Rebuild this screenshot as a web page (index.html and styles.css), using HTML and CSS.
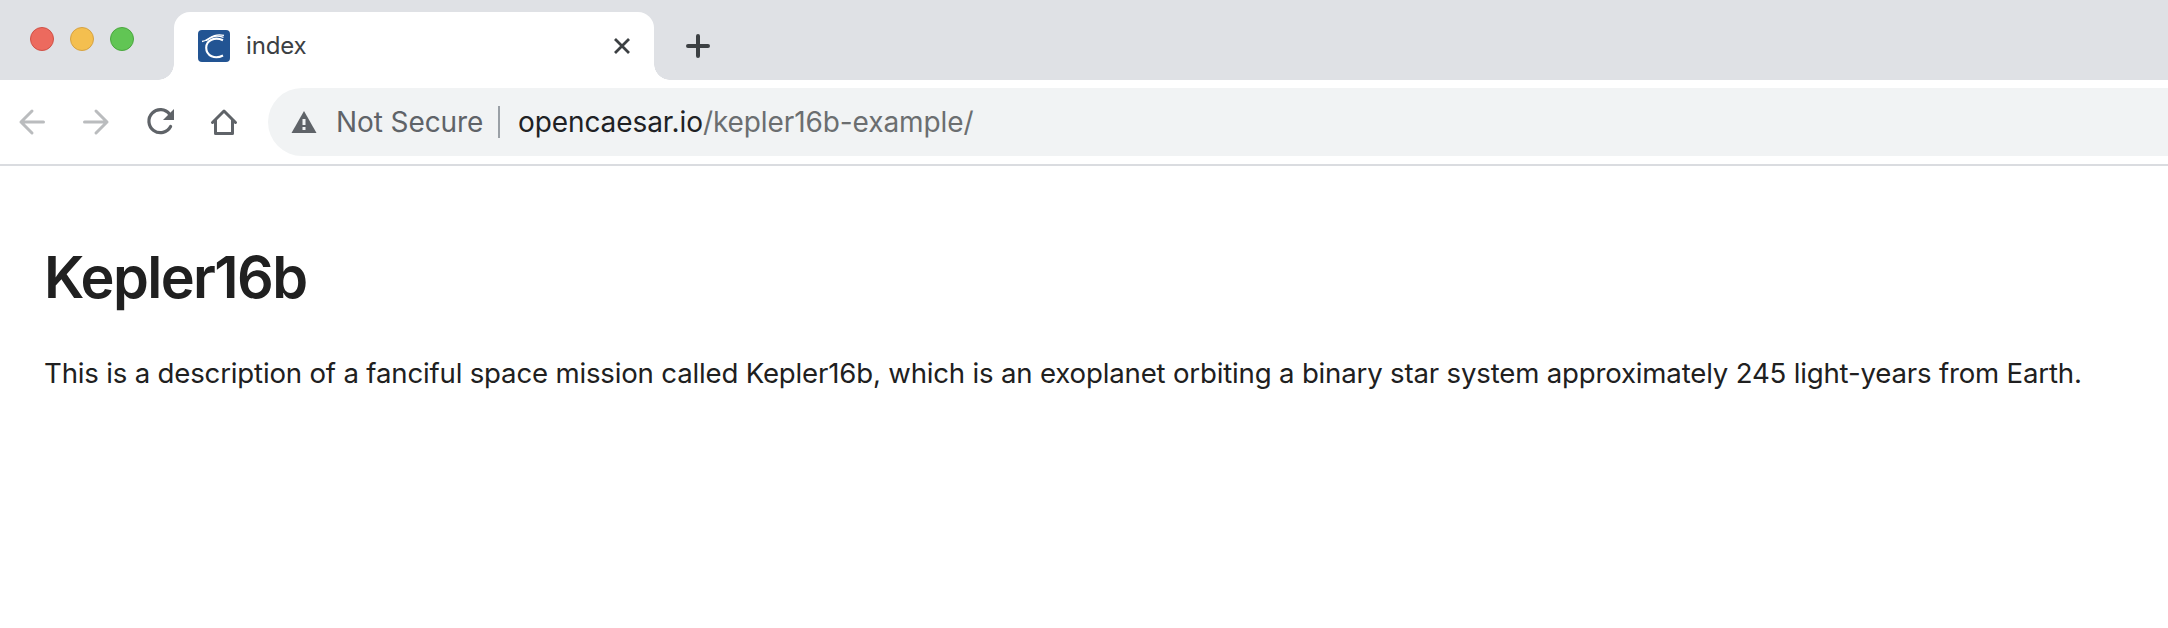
FILE: index.html
```html
<!DOCTYPE html>
<html lang="en">
<head>
<meta charset="utf-8">
<title>index</title>
<link rel="stylesheet" href="styles.css">
</head>
<body>
<header>
  <div class="tabstrip">
    <div class="lights"><i class="light red"></i><i class="light yellow"></i><i class="light green"></i></div>
    <div class="tab">
      <svg class="favicon" viewBox="0 0 32 32"><rect width="32" height="32" rx="4" fill="#225493"/><g fill="none" stroke="#fff"><path d="M25 10.2C17 6.500 8.200 10 8.200 17.800C8.200 26 17 29.500 25 25.500" stroke-width="2.100"/><path d="M4 11.500C10.500 11 13 2.800 26 5.300" stroke-width="1.300"/><path d="M8 10.800C14 6.300 18 4.800 25.500 7.300" stroke-width="1.300"/></g></svg>
      <span class="tab-title">index</span>
      <svg class="close" viewBox="0 0 16 16"><path d="M1 1L15 15M15 1L1 15"/></svg>
    </div>
    <svg class="plus" viewBox="0 0 24 24"><path d="M12 2V22M2 12H22"/></svg>
  </div>
  <nav class="toolbar">
    <svg class="icon faded" viewBox="0 0 32 32"><path d="M27.500 16H5M16 5L5 16L16 27"/></svg>
    <svg class="icon faded" viewBox="0 0 32 32"><path d="M4.500 16H27M16 5L27 16L16 27"/></svg>
    <svg class="icon" viewBox="0 0 32 32"><path class="arc" d="M25.600 8.200A11.500 11.500 0 1 0 26.600 20.500"/><path class="solid" d="M30 3V14H19Z"/></svg>
    <svg class="icon" viewBox="0 0 32 32"><path class="house" d="M4.500 16.500L16 5L27.500 16.500M7.500 14V27.500H24.500V14"/></svg>
    <div class="omnibox">
      <svg class="warning" viewBox="0 0 26 22"><path fill="#5f6368" d="M13 0L25.500 22H.5Z"/><path fill="#f1f3f4" d="M11.500 8H14.500V14H11.500ZM11.500 16H14.500V19H11.500Z"/></svg>
      <span class="status">Not Secure</span>
      <span class="divider"></span>
      <span class="url">opencaesar.io<span class="path">/kepler16b-example/</span></span>
    </div>
  </nav>
</header>
<main>
  <h1>Kepler16b</h1>
  <p>This is a description of a fanciful space mission called Kepler16b, which is an exoplanet orbiting a binary star system approximately 245 light-years from Earth.</p>
</main>
</body>
</html>
```
FILE: styles.css
```css
* { box-sizing: border-box; }
body { margin: 0; background: #fff; font-family: Inter, sans-serif; overflow: hidden; }
svg { display: block; flex: none; fill: none; }
.tabstrip { height: 80px; background: #dfe1e5; display: flex; align-items: flex-start; }
.lights { width: 174px; padding: 27px 0 0 30px; display: flex; gap: 16px; }
.light { width: 24px; height: 24px; border-radius: 50%; border: 1px solid; }
.red { background: #ec6a5e; border-color: #d05147; }
.yellow { background: #f4bf4f; border-color: #d6a243; }
.green { background: #61c554; border-color: #4ba73f; }
.tab { position: relative; width: 480px; height: 68px; margin-top: 12px; padding: 0 24px; border-radius: 16px 16px 0 0; background: #fff; display: flex; align-items: center; }
.tab::before, .tab::after { content: ""; position: absolute; bottom: 0; width: 16px; height: 16px; }
.tab::before { left: -16px; background: radial-gradient(circle at 0 0, transparent 15.500px, #fff 16px); }
.tab::after { right: -16px; background: radial-gradient(circle at 100% 0, transparent 15.500px, #fff 16px); }
.favicon { width: 32px; height: 32px; }
.tab-title { margin-left: 16px; flex: 1; font-size: 24px; line-height: 32px; letter-spacing: -0.15px; color: #3c4043; }
.close { width: 16px; height: 16px; stroke: #3c4043; stroke-width: 2.800; }
.plus { width: 24px; height: 24px; margin: 34px 0 0 32px; stroke: #3c4043; stroke-width: 4; stroke-linecap: round; }
.toolbar { height: 86px; border-bottom: 2px solid #dadce0; padding: 8px 0 8px 16px; display: flex; align-items: center; gap: 32px; }
.icon { width: 32px; height: 32px; stroke: #5f6368; stroke-width: 3; }
.faded { stroke: #babcbe; stroke-linecap: round; stroke-linejoin: round; }
.arc { stroke-width: 3.200; stroke-linecap: round; }
.solid { fill: #5f6368; stroke: none; }
.house { stroke-linejoin: round; stroke-linecap: round; }
.omnibox { height: 68px; flex: 1; margin-left: -4px; padding-left: 23px; border-radius: 34px 0 0 34px; background: #f1f3f4; display: flex; align-items: center; font-size: 28px; line-height: 40px; letter-spacing: -0.09px; white-space: nowrap; }
.warning { width: 26px; height: 22px; }
.status { width: 162px; margin-left: 19px; color: #5f6368; }
.divider { width: 2px; height: 32px; background: #9aa0a6; }
.url { margin-left: 18px; color: #202124; }
.path { color: #6b6e70; }
main { padding: 75px 44px; color: #202020; }
h1 { margin: 0; font-size: 57.500px; line-height: 72px; font-weight: 600; letter-spacing: -1.600px; }
p { margin: 40px 0 0; font-size: 27.600px; line-height: 40px; letter-spacing: -0.180px; white-space: nowrap; }
```
